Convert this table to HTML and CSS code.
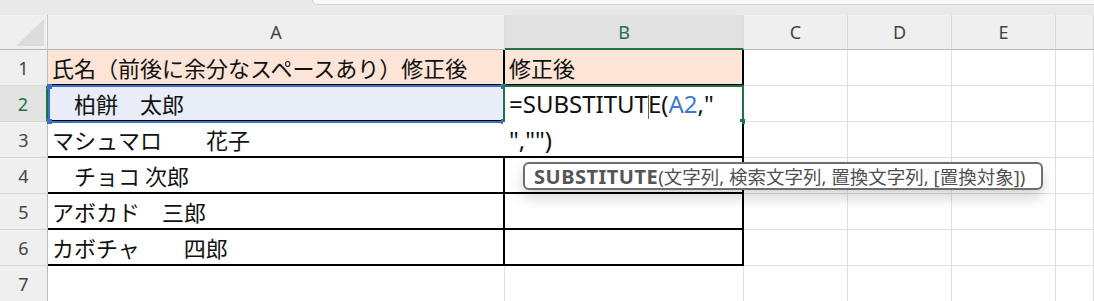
FILE: index.html
```html
<!DOCTYPE html>
<html lang="ja">
<head>
<meta charset="utf-8">
<title>Sheet</title>
<link rel="stylesheet" href="styles.css">
</head>
<body>
<div class="app">
  <div class="topbar"><div class="topbox"></div></div>
  <div class="sheet">
    <div class="corner"><div class="tri"></div></div>
    <div class="colhdr">A</div>
    <div class="colhdr sel">B</div>
    <div class="colhdr">C</div>
    <div class="colhdr">D</div>
    <div class="colhdr">E</div>
    <div class="colhdr"></div>

    <div class="rowhdr">1</div>
    <div class="cell t head">氏名（前後に余分なスペースあり）修正後</div>
    <div class="cell t head">修正後</div>
    <div class="cell"></div><div class="cell"></div><div class="cell"></div><div class="cell"></div>

    <div class="rowhdr sel">2</div>
    <div class="cell t hl">　柏餅　太郎</div>
    <div class="cell t"></div>
    <div class="cell"></div><div class="cell"></div><div class="cell"></div><div class="cell"></div>

    <div class="rowhdr">3</div>
    <div class="cell t">マシュマロ　　花子</div>
    <div class="cell t"></div>
    <div class="cell"></div><div class="cell"></div><div class="cell"></div><div class="cell"></div>

    <div class="rowhdr">4</div>
    <div class="cell t">　チョコ 次郎</div>
    <div class="cell t"></div>
    <div class="cell"></div><div class="cell"></div><div class="cell"></div><div class="cell"></div>

    <div class="rowhdr">5</div>
    <div class="cell t">アボカド　三郎</div>
    <div class="cell t"></div>
    <div class="cell"></div><div class="cell"></div><div class="cell"></div><div class="cell"></div>

    <div class="rowhdr">6</div>
    <div class="cell t">カボチャ　　四郎</div>
    <div class="cell t"></div>
    <div class="cell"></div><div class="cell"></div><div class="cell"></div><div class="cell"></div>

    <div class="rowhdr">7</div>
    <div class="cell"></div>
    <div class="cell"></div>
    <div class="cell"></div><div class="cell"></div><div class="cell"></div><div class="cell"></div>

    <div class="refbox">
      <span class="knob kb-tl"></span><span class="knob kb-tr"></span>
      <span class="knob kb-bl"></span><span class="knob kb-br"></span>
    </div>
    <div class="editor"><span class="handle"></span></div>
    <div class="editor-ext"></div>
    <div class="formula">=SUBSTITUT<span class="caret"></span>E(<span class="ref">A2</span>,"<br>","")</div>
    <div class="tip"><b>SUBSTITUTE</b>(文字列, 検索文字列, 置換文字列, [置換対象])</div>
  </div>
</div>
</body>
</html>
```
FILE: styles.css
```css
html, body {
  margin: 0;
  padding: 0;
  background: #ffffff;
  overflow: hidden;
}
.app {
  width: 1094px;
  height: 301px;
  overflow: hidden;
}
.topbar {
  height: 15px;
  background: #e9e9e9;
  display: flex;
  align-items: flex-start;
}
.topbox {
  margin-left: 312px;
  flex: 1;
  height: 4px;
  background: #f8f8f8;
  border-left: 1px solid #d4d4d4;
  border-bottom: 1px solid #d4d4d4;
  border-bottom-left-radius: 5px;
}
.sheet {
  position: relative;
  display: grid;
  grid-template-columns: 48px 457px 239px 104px 104px 104px 1fr;
  grid-template-rows: 35px repeat(7, 36px);
}
.sheet > div {
  box-sizing: border-box;
}
.corner {
  background: #efefef;
  border-right: 1px solid #c8c8c8;
  border-bottom: 1px solid #b8b8b8;
  padding: 4px 3px 3px 16px;
  display: flex;
}
.tri {
  flex: 1;
  background: #dcdcdc;
  clip-path: polygon(100% 0, 100% 100%, 0 100%);
}
.colhdr {
  background: #efefef;
  border-right: 1px solid #d8d8d8;
  border-bottom: 1px solid #b8b8b8;
  display: flex;
  align-items: center;
  justify-content: center;
  font-family: "Noto Sans", "Liberation Sans", sans-serif;
  font-size: 18px;
  color: #444444;
}
.colhdr.sel {
  background: #e1e1e1;
  color: #1e7145;
  border-bottom: 2px solid #217346;
}
.rowhdr {
  background: #efefef;
  border-right: 1px solid #bcbcbc;
  border-bottom: 1px solid #d8d8d8;
  display: flex;
  align-items: center;
  justify-content: center;
  font-family: "Noto Sans", "Liberation Sans", sans-serif;
  font-size: 18px;
  color: #444444;
}
.rowhdr.sel {
  background: #e3e3e3;
  color: #1e7145;
  border-right: 2px solid #217346;
}
.cell {
  border-right: 1px solid #e0e0e0;
  border-bottom: 1px solid #e0e0e0;
  display: flex;
  align-items: center;
  padding-left: 4px;
  white-space: pre;
  overflow: visible;
  font-family: "Noto Sans CJK JP", "Noto Sans", sans-serif;
  font-size: 22px;
  color: #111111;
}
.cell.t {
  border-right: 2px solid #000000;
  border-bottom: 2px solid #000000;
}
.cell.head {
  background: #fce4d6;
}
.cell.hl {
  background: #e8edf7;
}
.refbox {
  position: absolute;
  left: 48px;
  top: 70px;
  width: 457px;
  height: 38px;
  box-sizing: border-box;
  border: 2px solid #3b70c8;
}
.knob {
  position: absolute;
  width: 5px;
  height: 5px;
  background: #3b70c8;
}
.kb-tl { left: -3px; top: -3px; }
.kb-tr { right: -3px; top: -3px; }
.kb-bl { left: -3px; bottom: -3px; }
.kb-br { right: -3px; bottom: -3px; }
.editor {
  position: absolute;
  left: 503px;
  top: 70px;
  width: 241px;
  height: 37px;
  box-sizing: border-box;
  border: 2px solid #217346;
  border-bottom: none;
  background: #ffffff;
}
.handle {
  position: absolute;
  right: -3px;
  bottom: -2px;
  width: 5px;
  height: 5px;
  background: #217346;
}
.editor-ext {
  position: absolute;
  left: 503px;
  top: 107px;
  width: 239px;
  height: 34px;
  background: #ffffff;
}
.formula {
  position: absolute;
  left: 509px;
  top: 71px;
  font-family: "Noto Sans", "Noto Sans CJK JP", sans-serif;
  font-size: 24px;
  line-height: 36px;
  color: #111111;
  white-space: pre;
}
.ref {
  color: #3f78d4;
}
.caret {
  display: inline-block;
  width: 1px;
  height: 24px;
  margin-right: -1px;
  background: #666666;
  vertical-align: -6px;
}
.tip {
  position: absolute;
  left: 523px;
  top: 147px;
  width: 520px;
  height: 28px;
  box-sizing: border-box;
  border: 2px solid #6e6e6e;
  border-radius: 6px;
  background: #ffffff;
  box-shadow: 0 8px 14px rgba(0, 0, 0, 0.16);
  display: flex;
  align-items: center;
  padding-left: 9px;
  font-family: "Noto Sans", "Noto Sans CJK JP", sans-serif;
  font-size: 18.5px;
  color: #505050;
  white-space: pre;
}
.tip b {
  font-weight: 700;
  font-size: 20px;
  letter-spacing: 0.5px;
  color: #555555;
}
```
